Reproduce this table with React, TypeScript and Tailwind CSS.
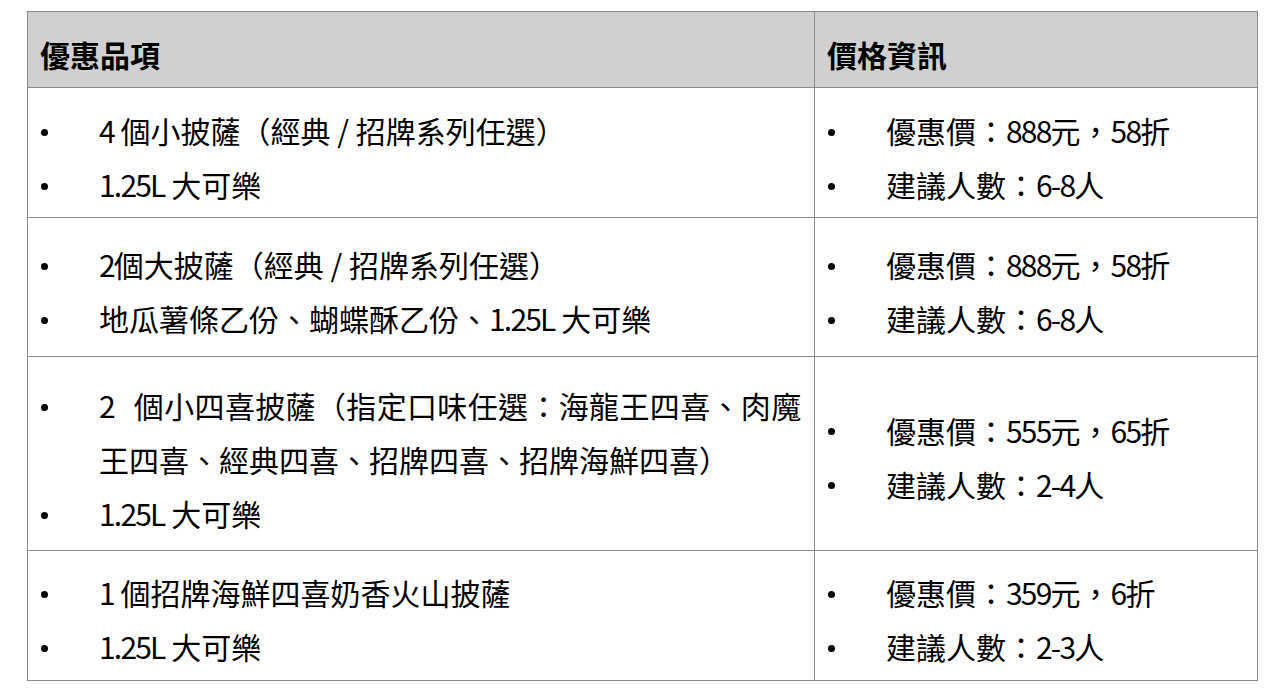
import React from "react";

const FONT = { fontFamily: '"Noto Sans CJK TC", "Noto Sans", sans-serif' };

function Item({ children }: { children: React.ReactNode }) {
  return (
    <div className="flex items-start">
      <div className="w-[58px] shrink-0 h-[54px] flex items-center">
        <div className="w-[7px] h-[7px] rounded-full bg-black mt-[4px]" />
      </div>
      <div className="whitespace-nowrap">{children}</div>
    </div>
  );
}

function L({ children }: { children: React.ReactNode }) {
  return <span className="tracking-[-1.8px]">{children}</span>;
}

export default function App() {
  return (
    <div className="w-[1284px] h-[692px] bg-white pt-[11px] pl-[27px] text-black" style={FONT}>
      <div className="grid w-[1231px] grid-cols-[786px_442px] grid-rows-[75px_129px_138px_193px_129px] gap-px bg-[#8a8a8a] p-px text-[30px] leading-[54px]">
        {/* header */}
        <div className="bg-[#d0d0d0] pl-[12px] pt-[15px] font-bold">優惠品項</div>
        <div className="bg-[#d0d0d0] pl-[12px] pt-[15px] font-bold">價格資訊</div>

        {/* row 1 */}
        <div className="bg-white pl-[13px] pt-[15px]">
          <Item>
            <L>4</L> 個小披薩（經典 / 招牌系列任選）
          </Item>
          <Item>
            <L>1.25L</L> 大可樂
          </Item>
        </div>
        <div className="bg-white pl-[13px] pt-[15px]">
          <Item>
            優惠價：<L>888</L>元，<L>58</L>折
          </Item>
          <Item>
            建議人數：<L>6-8</L>人
          </Item>
        </div>

        {/* row 2 */}
        <div className="bg-white pl-[13px] pt-[19px]">
          <Item>
            <L>2</L>個大披薩（經典 / 招牌系列任選）
          </Item>
          <Item>
            地瓜薯條乙份、蝴蝶酥乙份、<L>1.25L</L> 大可樂
          </Item>
        </div>
        <div className="bg-white pl-[13px] pt-[19px]">
          <Item>
            優惠價：<L>888</L>元，<L>58</L>折
          </Item>
          <Item>
            建議人數：<L>6-8</L>人
          </Item>
        </div>

        {/* row 3 */}
        <div className="bg-white pl-[13px] pt-[21px]">
          <Item>
            <L>2</L>
            <span className="inline-block w-[20px]" />
            <span className="tracking-[0.35px]">個小四喜披薩（指定口味任選：海龍王四喜、肉魔</span>
            <br />
            王四喜、經典四喜、招牌四喜、招牌海鮮四喜）
          </Item>
          <Item>
            <L>1.25L</L> 大可樂
          </Item>
        </div>
        <div className="bg-white pl-[13px] flex flex-col justify-center pt-[6px]">
          <Item>
            優惠價：<L>555</L>元，<L>65</L>折
          </Item>
          <Item>
            建議人數：<L>2-4</L>人
          </Item>
        </div>

        {/* row 4 */}
        <div className="bg-white pl-[13px] pt-[14px]">
          <Item>
            <L>1</L> 個招牌海鮮四喜奶香火山披薩
          </Item>
          <Item>
            <L>1.25L</L> 大可樂
          </Item>
        </div>
        <div className="bg-white pl-[13px] pt-[14px]">
          <Item>
            優惠價：<L>359</L>元，<L>6</L>折
          </Item>
          <Item>
            建議人數：<L>2-3</L>人
          </Item>
        </div>
      </div>
    </div>
  );
}
